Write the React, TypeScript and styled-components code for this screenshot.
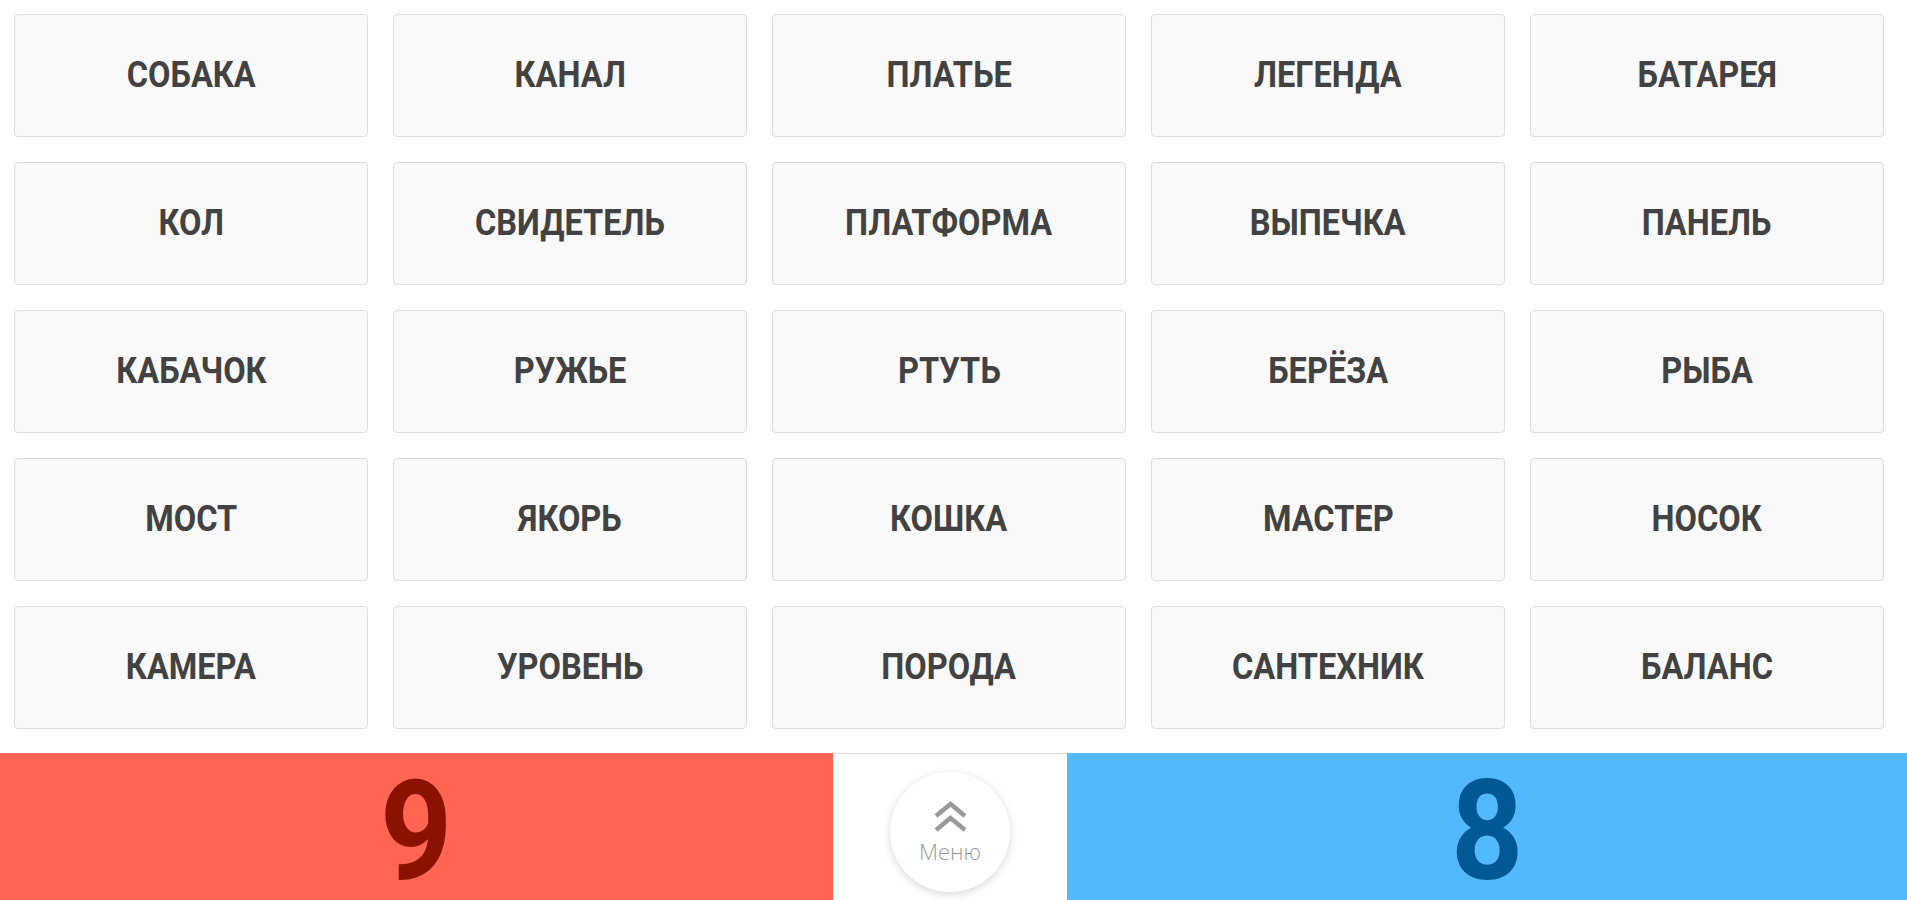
import React from 'react'
import styled, { createGlobalStyle } from 'styled-components'

const GlobalStyle = createGlobalStyle`
  html, body {
    margin: 0;
    padding: 0;
    background: #fff;
    font-family: Roboto, 'Liberation Sans', sans-serif;
  }
  * {
    box-sizing: border-box;
  }
`

const Page = styled.div`
  width: 100%;
  height: 900px;
  display: flex;
  flex-direction: column;
  overflow: hidden;
`

const Board = styled.div`
  display: grid;
  grid-template-columns: repeat(5, 1fr);
  grid-auto-rows: 123px;
  gap: 25px;
  padding: 14px 23px 24px 14px;
`

const Card = styled.div`
  display: flex;
  align-items: center;
  justify-content: center;
  background: #f9f9f9;
  border: 1px solid #dedede;
  border-radius: 4px;
  color: #424242;
  cursor: pointer;
  user-select: none;
`

const Word = styled.span`
  display: inline-block;
  font-family: Roboto, 'Liberation Sans', sans-serif;
  font-weight: 700;
  font-size: 37px;
  line-height: 1.1;
  transform: scaleX(0.88);
  white-space: nowrap;
`

const ScoreBar = styled.div`
  flex: 1;
  display: grid;
  grid-template-columns: 833px 234px 1fr;
`

const TeamScore = styled.div<{ $bg: string; $fg: string }>`
  display: flex;
  align-items: center;
  justify-content: center;
  background: ${({ $bg }) => $bg};
  color: ${({ $fg }) => $fg};
  font-family: Roboto, 'Liberation Sans', sans-serif;
  font-weight: 700;
  font-size: 140px;
  line-height: 130px;
  padding-top: 9px;
`

const Digit = styled.span`
  display: inline-block;
  transform: scaleX(0.9);
`

const Middle = styled.div`
  display: flex;
  justify-content: center;
  align-items: flex-start;
  padding-top: 18px;
  border-top: 1px solid #dcdcdc;
  background: #fff;
`

const MenuButton = styled.button`
  width: 120px;
  height: 120px;
  border-radius: 50%;
  border: none;
  background: #fff;
  box-shadow: 0 2px 8px rgba(0, 0, 0, 0.16);
  display: flex;
  flex-direction: column;
  align-items: center;
  justify-content: center;
  gap: 8px;
  padding: 0 0 2px;
  cursor: pointer;
  color: #9a9a9a;
`

const MenuLabel = styled.span`
  font-family: 'Open Sans', 'Noto Sans', sans-serif;
  font-weight: 300;
  font-size: 22px;
  line-height: 1;
  color: #9a9a9a;
`

const words = [
  'СОБАКА', 'КАНАЛ', 'ПЛАТЬЕ', 'ЛЕГЕНДА', 'БАТАРЕЯ',
  'КОЛ', 'СВИДЕТЕЛЬ', 'ПЛАТФОРМА', 'ВЫПЕЧКА', 'ПАНЕЛЬ',
  'КАБАЧОК', 'РУЖЬЕ', 'РТУТЬ', 'БЕРЁЗА', 'РЫБА',
  'МОСТ', 'ЯКОРЬ', 'КОШКА', 'МАСТЕР', 'НОСОК',
  'КАМЕРА', 'УРОВЕНЬ', 'ПОРОДА', 'САНТЕХНИК', 'БАЛАНС',
]

const ChevronsIcon = () => (
  <svg width="35" height="31" viewBox="0 0 35 31" fill="none">
    <path d="M3 15 L17.5 3 L32 15" stroke="#9a9a9a" strokeWidth="4.5" />
    <path d="M3 29 L17.5 17 L32 29" stroke="#9a9a9a" strokeWidth="4.5" />
  </svg>
)

export default function App() {
  return (
    <Page>
      <GlobalStyle />
      <Board>
        {words.map((w) => (
          <Card key={w}>
            <Word>{w}</Word>
          </Card>
        ))}
      </Board>
      <ScoreBar>
        <TeamScore $bg="#ff6552" $fg="#8a1200">
          <Digit>9</Digit>
        </TeamScore>
        <Middle>
          <MenuButton>
            <ChevronsIcon />
            <MenuLabel>Меню</MenuLabel>
          </MenuButton>
        </Middle>
        <TeamScore $bg="#53b9fe" $fg="#005893">
          <Digit>8</Digit>
        </TeamScore>
      </ScoreBar>
    </Page>
  )
}
